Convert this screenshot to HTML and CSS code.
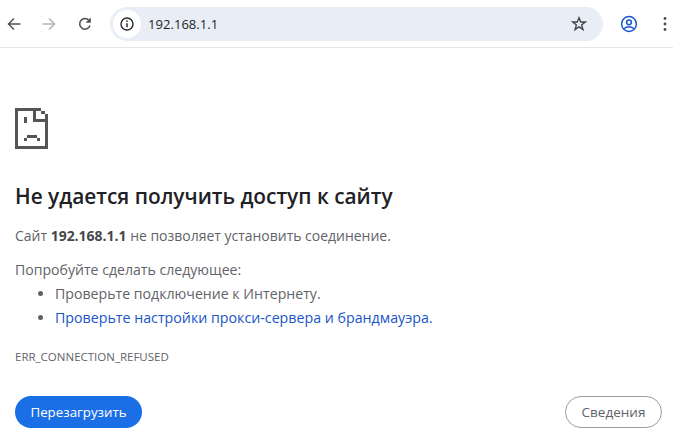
FILE: index.html
```html
<!DOCTYPE html>
<html lang="ru">
<head>
<meta charset="utf-8">
<title>192.168.1.1</title>
<link rel="stylesheet" href="styles.css">
</head>
<body>
<header class="toolbar">
  <svg class="nav-icon back" viewBox="0 0 16 16"><path d="M14.5 8H2.500M8 2.500 2.500 8 8 13.500" fill="none" stroke="#505356" stroke-width="1.500"/></svg>
  <svg class="nav-icon forward" viewBox="0 0 16 16"><path d="M1.500 8h12M8 2.500 13.500 8 8 13.500" fill="none" stroke="#b4b6b8" stroke-width="1.500"/></svg>
  <svg class="nav-icon reload" viewBox="0 0 16 16"><path d="M13 9.600A5.300 5.300 0 1 1 12 4.400" fill="none" stroke="#505356" stroke-width="1.600"/><path d="M13.800 1.600v5.200H8.600z" fill="#505356"/></svg>
  <div class="omnibox">
    <span class="site-chip">
      <svg class="info" viewBox="0 0 16 16"><circle cx="8" cy="8" r="6" fill="none" stroke="#2a2c30" stroke-width="1.400"/><path d="M8 7.200v4" stroke="#2a2c30" stroke-width="1.500"/><circle cx="8" cy="5.100" r=".9" fill="#2a2c30"/></svg>
    </span>
    <span class="url">192.168.1.1</span>
    <svg class="star" viewBox="0 0 16 16"><path d="M8 1.800 9.700 6h4.600l-3.700 2.900 1.400 4.700L8 10.900l-4 2.700 1.400-4.700L1.700 6h4.600z" fill="none" stroke="#44474a" stroke-width="1.400"/></svg>
  </div>
  <svg class="profile" viewBox="0 0 18 18"><circle cx="9" cy="9" r="7.400" fill="none" stroke="#1a55c8" stroke-width="1.500"/><circle cx="9" cy="7.300" r="2.400" fill="none" stroke="#1a55c8" stroke-width="1.500"/><path d="M4 13.500c3-2.200 7-2.200 10 0" fill="none" stroke="#1a55c8" stroke-width="1.500"/></svg>
  <svg class="menu" viewBox="0 0 4 16"><circle cx="2" cy="2.500" r="1.400" fill="#484b4e"/><circle cx="2" cy="8" r="1.400" fill="#484b4e"/><circle cx="2" cy="13.500" r="1.400" fill="#484b4e"/></svg>
</header>
<main class="page">
  <svg class="sad-icon" viewBox="0 0 33 41" shape-rendering="crispEdges"><path fill="#555" d="M0 0h26v3H21v8h9V6h3v35H0V0zM3 3v35h27V14H18V3zM26 3h4v3h-4zM9 9h3v6H9zM12 27h10v3H12zM9 30h3v3H9zM22 30h3v3h-3z" fill-rule="evenodd"/></svg>
  <h1 class="title">Не удается получить доступ к сайту</h1>
  <p class="summary">Сайт <strong>192.168.1.1</strong> не позволяет установить соединение.</p>
  <p class="try">Попробуйте сделать следующее:</p>
  <ul class="suggestions">
    <li>Проверьте подключение к Интернету.</li>
    <li><a class="link" href="#">Проверьте настройки прокси-сервера и брандмауэра.</a></li>
  </ul>
  <div class="code">ERR_CONNECTION_REFUSED</div>
  <div class="actions">
    <button class="btn primary">Перезагрузить</button>
    <button class="btn secondary">Сведения</button>
  </div>
</main>
</body>
</html>
```
FILE: styles.css
```css
html, body { margin: 0; padding: 0; background: #fff; overflow: hidden; }
body { font-family: "Open Sans", "Noto Sans", sans-serif; color: #5f6368; height: 439px; }
.toolbar { box-sizing: border-box; height: 48px; border-bottom: 1px solid #e6e6e6; display: flex; align-items: center; padding: 0 6px 0 6px; }
.nav-icon { width: 16px; height: 16px; flex: none; }
.forward { margin-left: 19px; }
.reload { margin-left: 20px; }
.omnibox { flex: 1; margin-left: 17px; height: 34px; background: #e9eef6; border-radius: 17px; display: flex; align-items: center; padding: 0 16px 0 3px; }
.site-chip { width: 28px; height: 28px; background: #fff; border-radius: 50%; display: flex; align-items: center; justify-content: center; }
.info { width: 16px; height: 16px; }
.url { flex: 1; margin-left: 7px; font-size: 13.1px; color: #1f1f1f; }
.star { width: 16px; height: 16px; }
.profile { width: 18px; height: 18px; margin-left: 17px; flex: none; }
.menu { width: 4px; height: 16px; margin-left: 25px; flex: none; }
.page { padding: 60px 11px 0 15px; }
.sad-icon { display: block; width: 33px; height: 41px; }
.title { margin: 33px 0 0; font-size: 20.85px; line-height: 28px; font-weight: 600; color: #202124; }
.summary { margin: 16px 0 0; font-size: 13.98px; line-height: 20px; }
.summary strong { color: #45484c; }
.try { margin: 14px 0 0; font-size: 14.1px; line-height: 20px; }
.suggestions { margin: 2px 0 0; padding-left: 40px; font-size: 14.15px; line-height: 24px; }
.link { color: #1a55c8; text-decoration: none; font-size: 14.22px; }
.code { margin-top: 19px; font-size: 11.5px; line-height: 16px; }
.actions { margin-top: 31px; display: flex; justify-content: space-between; align-items: center; }
.btn { box-sizing: border-box; height: 32px; border-radius: 16px; font-family: inherit; font-size: 13.5px; padding: 0; }
.primary { width: 127px; background: #1a6fe6; color: #fff; border: none; font-size: 13.3px; }
.secondary { width: 97px; background: #fff; color: #5f6368; border: 1px solid #9a9da1; }
```
